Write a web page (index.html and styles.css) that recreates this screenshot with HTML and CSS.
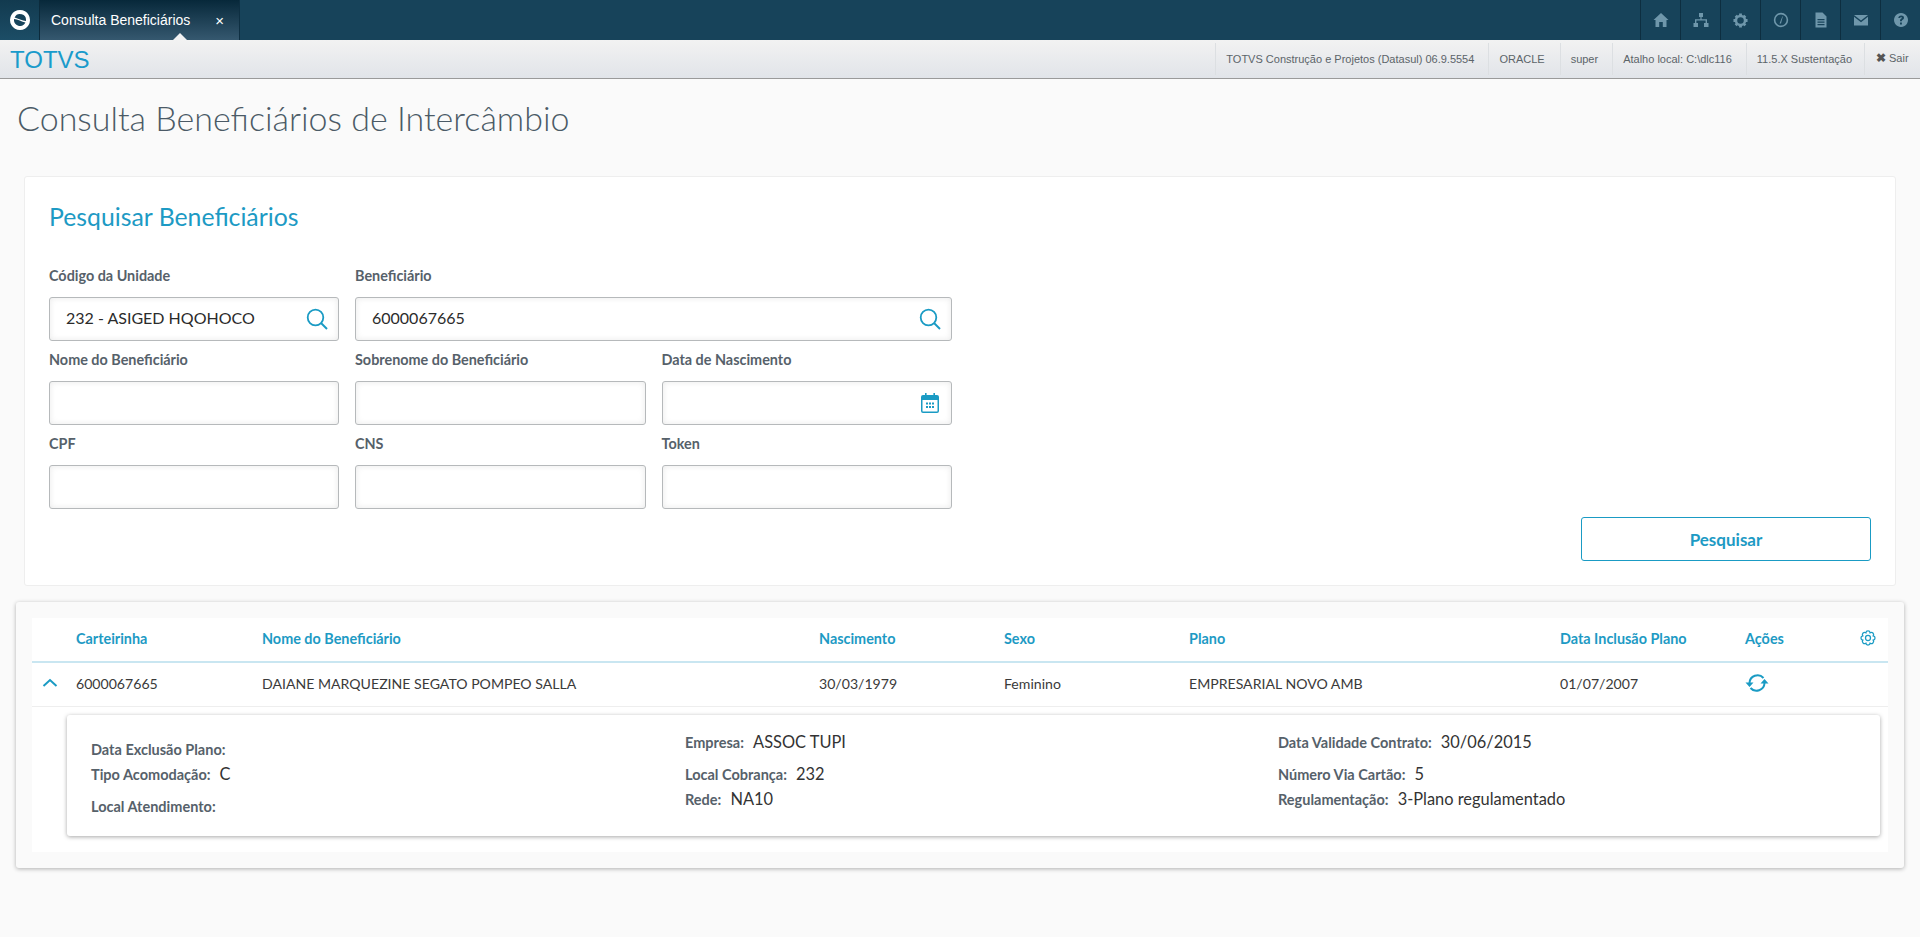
FILE: index.html
```html
<!DOCTYPE html>
<html lang="pt-BR">
<head>
<meta charset="utf-8">
<title>Consulta Beneficiários</title>
<link rel="stylesheet" href="styles.css">
</head>
<body>
<header class="topbar">
  <div class="logo-btn">
    <svg width="22" height="22" viewBox="0 0 22 22"><path fill="#fff" fill-rule="evenodd" d="M11 1a10 10 0 1 0 .01 0ZM5.600 8.400A6 6 0 0 1 16.900 12C13.500 11.500 9 9.500 5.600 8.400ZM5.100 10C8.500 10.500 13 12.500 16.400 13.600A6 6 0 0 1 5.100 10Z"/></svg>
  </div>
  <div class="tab">
    <span class="tab-label">Consulta Beneficiários</span>
    <span class="tab-close">×</span>
    <span class="tab-caret"></span>
  </div>
  <nav class="top-icons">
    <div class="top-icon"><svg width="16" height="16" viewBox="0 0 16 16"><path d="M8 1 L15.500 8 H13.500 V15 H9.800 V10 H6.200 V15 H2.500 V8 H.5Z"/></svg></div>
    <div class="top-icon"><svg width="16" height="16" viewBox="0 0 16 16"><path d="M6 1h4v4H8.600v2.200H14V11h1.500v4h-4.500v-4h1.600V8.600H3.400V11H5v4H.5v-4H2V7.200h5.400V5H6Z"/></svg></div>
    <div class="top-icon"><svg width="15" height="15" viewBox="0 0 16 16"><circle cx="8" cy="8" r="4.800" fill="none" stroke="#6f97ab" stroke-width="2.600"/><path d="M6.500 0.500h3v3h-3zM6.500 12.500h3v3h-3zM0.500 6.500h3v3h-3zM12.500 6.500h3v3h-3z"/><path d="M1.800 4l2.200-2.200 2 2-2.200 2.200zM10 3.800l2-2 2.200 2.200-2 2zM1.800 12l2.200-2.200 2 2L3.800 14zM10 12.200l2-2 2.200 2-2 2z"/></svg></div>
    <div class="top-icon"><svg width="16" height="16" viewBox="0 0 16 16"><circle cx="8" cy="8" r="6.400" fill="none" stroke="#6f97ab" stroke-width="1.600"/><path d="M6.600 11.500 L9.400 4.200 L9.800 4.400 L8 11.500Z"/></svg></div>
    <div class="top-icon"><svg width="16" height="16" viewBox="0 0 16 16"><path d="M2.500 0.500H9.500L13.500 4.500V15.500H2.500ZM4.500 7v1.200h7V7ZM4.500 9.500v1.200h7V9.500ZM4.500 12v1.200h7V12Z" fill-rule="evenodd"/></svg></div>
    <div class="top-icon"><svg width="16" height="16" viewBox="0 0 16 16"><path d="M1 3H15L8 8.500ZM1 4.800 L8 10.300 L15 4.800V13.500H1Z"/></svg></div>
    <div class="top-icon"><svg width="16" height="16" viewBox="0 0 16 16"><path fill-rule="evenodd" d="M8 1a7 7 0 1 0 .01 0ZM5.300 6c.1-1.800 1.300-2.600 2.900-2.600 1.600 0 2.800.9 2.800 2.300 0 1.100-.7 1.600-1.300 2-.5.4-.8.6-.8 1.200v.4H7v-.6c0-1 .5-1.500 1.100-1.900.4-.3.7-.5.7-1 0-.4-.3-.7-.7-.7-.5 0-.8.3-.9 1ZM7 10.500h1.900v1.900H7Z"/></svg></div>
  </nav>
</header>

<div class="subbar">
  <div class="brand">TOTVS</div>
  <ul class="info">
    <li>TOTVS Construção e Projetos (Datasul) 06.9.5554</li>
    <li class="oracle">ORACLE</li>
    <li>super</li>
    <li>Atalho local: C:\dlc116</li>
    <li class="version">11.5.X Sustentação</li>
    <li class="logout"><b>✖</b> Sair</li>
  </ul>
</div>

<main class="page">
  <h1 class="page-title">Consulta Beneficiários de Intercâmbio</h1>

  <section class="search-card">
    <h2 class="search-title">Pesquisar Beneficiários</h2>
    <div class="form-grid">
      <div class="field">
        <label>Código da Unidade</label>
        <div class="input"><span>232 - ASIGED HQOHOCO</span>
          <svg class="search-ic" width="22" height="22" viewBox="0 0 22 22"><circle cx="9.500" cy="9.500" r="7.800" fill="none" stroke-width="1.800"/><path d="M15 15 L21 21" stroke-width="2" fill="none"/></svg>
        </div>
      </div>
      <div class="field span2">
        <label>Beneficiário</label>
        <div class="input"><span>6000067665</span>
          <svg class="search-ic" width="22" height="22" viewBox="0 0 22 22"><circle cx="9.500" cy="9.500" r="7.800" fill="none" stroke-width="1.800"/><path d="M15 15 L21 21" stroke-width="2" fill="none"/></svg>
        </div>
      </div>
      <div class="field"><label>Nome do Beneficiário</label><div class="input"></div></div>
      <div class="field"><label>Sobrenome do Beneficiário</label><div class="input"></div></div>
      <div class="field">
        <label>Data de Nascimento</label>
        <div class="input">
          <svg class="cal-ic" width="18" height="20" viewBox="0 0 18 20"><path fill-rule="evenodd" d="M4 0h1.600v2h6.800V0H14v2h2a2 2 0 0 1 2 2v14a2 2 0 0 1-2 2H2a2 2 0 0 1-2-2V4a2 2 0 0 1 2-2h2ZM1.500 7v11a.5.5 0 0 0 .5.500h14a.5.5 0 0 0 .5-.5V7ZM5 9.500h2v2H5ZM8 9.500h2v2H8ZM11 9.500h2v2h-2ZM5 13h2v2H5ZM8 13h2v2H8ZM11 13h2v2h-2Z"/></svg>
        </div>
      </div>
      <div class="field"><label>CPF</label><div class="input"></div></div>
      <div class="field"><label>CNS</label><div class="input"></div></div>
      <div class="field"><label>Token</label><div class="input"></div></div>
    </div>
    <div class="actions"><button class="btn" type="button">Pesquisar</button></div>
  </section>

  <section class="result-card">
    <div class="result-inner">
      <div class="t-row t-head">
        <div></div>
        <div>Carteirinha</div>
        <div>Nome do Beneficiário</div>
        <div>Nascimento</div>
        <div>Sexo</div>
        <div>Plano</div>
        <div>Data Inclusão Plano</div>
        <div>Ações</div>
        <div class="gear-cell"><svg class="gear" width="16" height="16" viewBox="1 1 14 14"><circle cx="8" cy="8" r="2.200" fill="none"/><path fill="none" d="M6.120 3.470A1.900 1.900 0 0 1 9.880 3.470A1.900 1.900 0 0 1 12.530 6.120A1.900 1.900 0 0 1 12.530 9.880A1.900 1.900 0 0 1 9.880 12.530A1.900 1.900 0 0 1 6.120 12.530A1.900 1.900 0 0 1 3.470 9.880A1.900 1.900 0 0 1 3.470 6.120A1.900 1.900 0 0 1 6.120 3.470Z"/></svg></div>
      </div>
      <div class="t-row t-body">
        <div class="chev-cell"><svg width="16" height="10" viewBox="0 0 16 10"><path d="M1.500 8 L8 2 L14.500 8" fill="none" stroke="#1a9bc4" stroke-width="2"/></svg></div>
        <div>6000067665</div>
        <div>DAIANE MARQUEZINE SEGATO POMPEO SALLA</div>
        <div>30/03/1979</div>
        <div>Feminino</div>
        <div>EMPRESARIAL NOVO AMB</div>
        <div>01/07/2007</div>
        <div class="refresh-cell"><svg width="24" height="20" viewBox="0 0 24 20"><g fill="none" stroke="#1a9bc4" stroke-width="2"><path d="M4.500 10 A8 8 0 0 1 18.500 5"/><path d="M19.500 10 A8 8 0 0 1 5.500 15"/></g><path d="M0.500 9.500 L4.500 14 L8.500 9.500Z M15.500 10.500 L19.500 6 L23.500 10.500Z" fill="#1a9bc4"/></svg></div>
        <div></div>
      </div>
      <div class="detail-wrap">
        <div class="detail">
          <div class="d-col d-col-a">
            <p class="d-line"><b>Data Exclusão Plano:</b></p>
            <p class="d-line"><b>Tipo Acomodação:</b> <span>C</span></p>
            <p class="d-line d-far"><b>Local Atendimento:</b></p>
          </div>
          <div class="d-col d-col-b">
            <p class="d-line"><b>Empresa:</b> <span>ASSOC TUPI</span></p>
            <p class="d-line d-mid"><b>Local Cobrança:</b> <span>232</span></p>
            <p class="d-line"><b>Rede:</b> <span>NA10</span></p>
          </div>
          <div class="d-col d-col-b">
            <p class="d-line"><b>Data Validade Contrato:</b> <span>30/06/2015</span></p>
            <p class="d-line d-mid"><b>Número Via Cartão:</b> <span>5</span></p>
            <p class="d-line"><b>Regulamentação:</b> <span>3-Plano regulamentado</span></p>
          </div>
        </div>
      </div>
    </div>
  </section>
</main>
</body>
</html>
```
FILE: styles.css
```css
* { box-sizing: border-box; }
html, body { margin: 0; padding: 0; }
body {
  height: 937px;
  overflow: hidden;
  background: #fafafa;
  font-family: "Lato", "Noto Sans", sans-serif;
  color: #333;
}
.topbar {
  height: 40px;
  background: #17435a;
  display: flex;
  align-items: stretch;
}
.logo-btn {
  width: 40px;
  border-right: 1px solid #0c2b3c;
  background: linear-gradient(#123a4f, #1c4d66);
  display: flex;
  align-items: center;
  justify-content: center;
}
.tab {
  position: relative;
  width: 200px;
  background: linear-gradient(#07283a, #35586f);
  border-right: 1px solid #0e2f42;
  color: #fff;
  font: 14px "Liberation Sans", sans-serif;
  display: flex;
  align-items: center;
  padding-left: 11px;
}
.tab-label { flex: 0 0 auto; }
.tab-close { margin-left: 25px; font-size: 15px; }
.tab-caret {
  position: absolute;
  left: 133px;
  bottom: 0;
  border-left: 7px solid transparent;
  border-right: 7px solid transparent;
  border-bottom: 7px solid #f1f2f3;
}
.top-icons { margin-left: auto; display: flex; }
.top-icon {
  width: 40px;
  border-left: 1px solid #0d2e40;
  display: flex;
  align-items: center;
  justify-content: center;
}
.top-icon svg { fill: #6f97ab; }
.subbar {
  height: 39px;
  background: linear-gradient(#f2f2f2, #e1e4e9);
  border-bottom: 1px solid #9a9a9a;
  display: flex;
  justify-content: space-between;
  align-items: stretch;
}
.brand {
  font: 24px/40px "Liberation Sans", sans-serif;
  color: #1a9bcb;
  padding-left: 10px;
}
.info {
  list-style: none;
  margin: 0;
  padding: 3px 0 0;
  display: flex;
  font: 11px "Liberation Sans", sans-serif;
  color: #5c6469;
}
.info li {
  border-left: 1px solid #dcdfe2;
  padding: 0 14px 0 10px;
  display: flex;
  align-items: center;
  height: 32px;
}
.info li.oracle { padding-right: 15px; }
.info li.version { padding-right: 12px; }
.info li.logout { padding: 0 8px 2px 11px; width: 56px; }
.logout b { color: #555; font-size: 12px; margin-right: 3px; }
.page { padding: 0 16px; }
.page-title {
  margin: 0;
  height: 97px;
  padding: 16px 0 0 1px;
  font-size: 34px;
  line-height: 46px;
  font-weight: 300;
  color: #4b5a66;
}
.search-card {
  margin: 0 8px;
  height: 410px;
  background: #fff;
  border: 1px solid #eeeeee;
  border-radius: 3px;
  padding: 24px 24px 0;
}
.search-title {
  margin: 0;
  height: 65px;
  font-size: 24.800px;
  line-height: 32px;
  font-weight: 400;
  color: #1d9ac4;
}
.form-grid {
  display: grid;
  grid-template-columns: 290px 290.500px 290px;
  grid-template-rows: 84px 84px 83px;
  column-gap: 16px;
  width: 903px;
}
.span2 { grid-column: span 2; }
.field label {
  display: block;
  height: 31px;
  line-height: 20px;
  font-size: 14.400px;
  font-weight: 700;
  color: #56616a;
}
.input {
  position: relative;
  height: 44px;
  border: 1px solid #b6b9bb;
  border-radius: 3px;
  box-shadow: inset 0 0 6px rgba(0,0,0,.09);
  background: #fff;
  padding: 0 16px;
  display: flex;
  align-items: center;
  justify-content: space-between;
  font-size: 16px;
  color: #2b2b2b;
}
.input span { padding-bottom: 3px; }
.search-ic { stroke: #1a9bc4; margin-right: -6px; }
.cal-ic { fill: #1a9bc4; margin-left: auto; margin-right: -4px; }
.actions { display: flex; justify-content: flex-end; }
.btn {
  width: 290px;
  height: 44px;
  background: #fff;
  border: 1px solid #1a9bc4;
  border-radius: 3px;
  color: #1d9ac4;
  font: 700 17px "Lato", sans-serif;
}
.result-card {
  margin-top: 16px;
  height: 266px;
  background: #fafafa;
  border-radius: 3px;
  box-shadow: 0 1px 4px rgba(0,0,0,.3);
  padding: 16px;
}
.result-inner { background: #fff; height: 234px; }
.t-row {
  display: grid;
  grid-template-columns: 44px 186px 557px 185px 185px 371px 185px 1fr 30px;
  align-items: center;
  font-size: 14px;
}
.t-head {
  height: 45px;
  padding-bottom: 3px;
  border-bottom: 2px solid #c9e6f1;
  color: #1d9ac4;
  font-weight: 700;
  font-size: 14.400px;
}
.gear-cell { display: flex; padding-left: 2px; }
.gear { stroke: #1a9bc4; stroke-width: 1.100; }
.t-body {
  height: 44px;
  padding-bottom: 3px;
  border-bottom: 1px solid #eeeeee;
  color: #3a3a3a;
  font-size: 14.100px;
}
.chev-cell { display: flex; padding-left: 10px; }
.refresh-cell { display: flex; }
.detail-wrap { padding: 8px 8px 0 35px; }
.detail {
  height: 121px;
  background: #fff;
  border-radius: 3px;
  box-shadow: 0 1px 4px rgba(0,0,0,.35);
  display: grid;
  grid-template-columns: 594px 593px 1fr;
  padding: 16px 24px;
}
.d-line { margin: 0; height: 25px; line-height: 22px; white-space: nowrap; }
.d-line b { font-size: 14.500px; font-weight: 700; color: #56616a; }
.d-line span { font-size: 16.400px; font-weight: 400; color: #333; margin-left: 5px; }
.d-col-a { padding-top: 7px; }
.d-far { margin-top: 7px; }
.d-mid { margin-top: 7px; }
```
